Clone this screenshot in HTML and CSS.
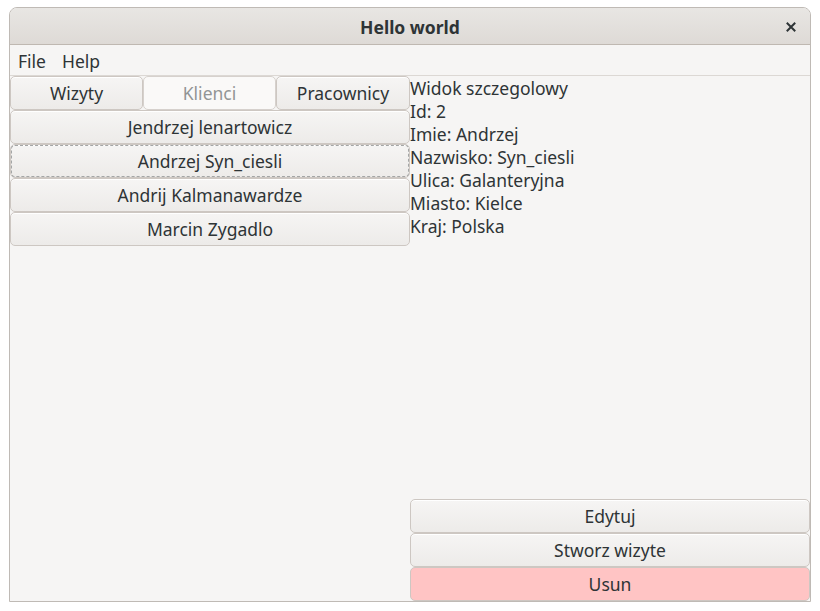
FILE: index.html
```html
<!DOCTYPE html>
<html>
<head>
<meta charset="utf-8">
<link rel="stylesheet" href="styles.css">
</head>
<body>
<div class="window">
  <div class="titlebar">
    <span class="title">Hello world</span>
    <span class="close"><svg width="10" height="10" viewBox="0 0 10 10"><path d="M1.5 1.5 L8.5 8.5 M8.5 1.5 L1.5 8.5" stroke="#2e3436" stroke-width="2" stroke-linecap="square"/></svg></span>
  </div>
  <div class="menubar">
    <span class="menu-item">File</span>
    <span class="menu-item">Help</span>
  </div>
  <div class="content">
    <div class="left">
      <div class="tabs">
        <button class="btn">Wizyty</button>
        <button class="btn active">Klienci</button>
        <button class="btn">Pracownicy</button>
      </div>
      <button class="btn">Jendrzej lenartowicz</button>
      <button class="btn focused">Andrzej Syn_ciesli</button>
      <button class="btn">Andrij Kalmanawardze</button>
      <button class="btn">Marcin Zygadlo</button>
    </div>
    <div class="right">
      <div class="details">
        <div>Widok szczegolowy</div>
        <div>Id: 2</div>
        <div>Imie: Andrzej</div>
        <div>Nazwisko: Syn_ciesli</div>
        <div>Ulica: Galanteryjna</div>
        <div>Miasto: Kielce</div>
        <div>Kraj: Polska</div>
      </div>
      <div class="actions">
        <button class="btn">Edytuj</button>
        <button class="btn">Stworz wizyte</button>
        <button class="btn danger">Usun</button>
      </div>
    </div>
  </div>
</div>
</body>
</html>
```
FILE: styles.css
```css
* { box-sizing: border-box; }
html, body { margin: 0; padding: 0; background: #ffffff; }
body {
  font-family: "Noto Sans", "DejaVu Sans", sans-serif;
  font-size: 17.5px;
  color: #2e3436;
  padding: 7px 0 0 9px;
}
.window {
  width: 802px;
  height: 595px;
  border: 1px solid #bfbab5;
  border-radius: 8px 8px 0 0;
  background: #f6f5f4;
  display: flex;
  flex-direction: column;
  overflow: hidden;
}
.titlebar {
  height: 37px;
  flex: none;
  background: linear-gradient(#e8e6e3, #dedad6);
  border-bottom: 1px solid #bfb8b1;
  display: flex;
  align-items: center;
  justify-content: center;
  position: relative;
  padding-top: 2px;
}
.title {
  font-weight: bold;
  font-size: 17.5px;
  color: #2e3436;
}
.close {
  position: absolute;
  right: 14px;
  top: 14px;
  width: 10px;
  height: 10px;
  display: flex;
}
.menubar {
  height: 31px;
  flex: none;
  border-bottom: 1px solid #dcd8d4;
  display: flex;
  align-items: center;
  padding-left: 8px;
  padding-top: 2px;
  gap: 16px;
}
.content {
  flex: 1;
  display: grid;
  grid-template-columns: 400px 400px;
  min-height: 0;
}
.left, .right {
  display: flex;
  flex-direction: column;
}
.tabs {
  display: grid;
  grid-template-columns: 133px 133px 134px;
}
.btn {
  font-family: inherit;
  font-size: 17.5px;
  color: #2e3436;
  height: 34px;
  margin: 0;
  padding: 0;
  border: 1px solid #cdc7c2;
  border-radius: 5px;
  background: linear-gradient(#f6f5f4, #edebe9);
  box-shadow: inset 0 1px #ffffff;
  width: 100%;
  display: flex;
  align-items: center;
  justify-content: center;
}
.btn.active {
  background: #faf9f8;
  color: #929595;
  box-shadow: none;
  border-color: #d6d1cd;
}
.btn.focused {
  outline: 1px dashed #a4a6a6;
  outline-offset: -2px;
}
.btn.danger {
  background: #ffc4c4;
  box-shadow: none;
}
.right {
  justify-content: space-between;
}
.details {
  line-height: 23px;
  padding-top: 1px;
}
.actions {
  display: flex;
  flex-direction: column;
}
```
